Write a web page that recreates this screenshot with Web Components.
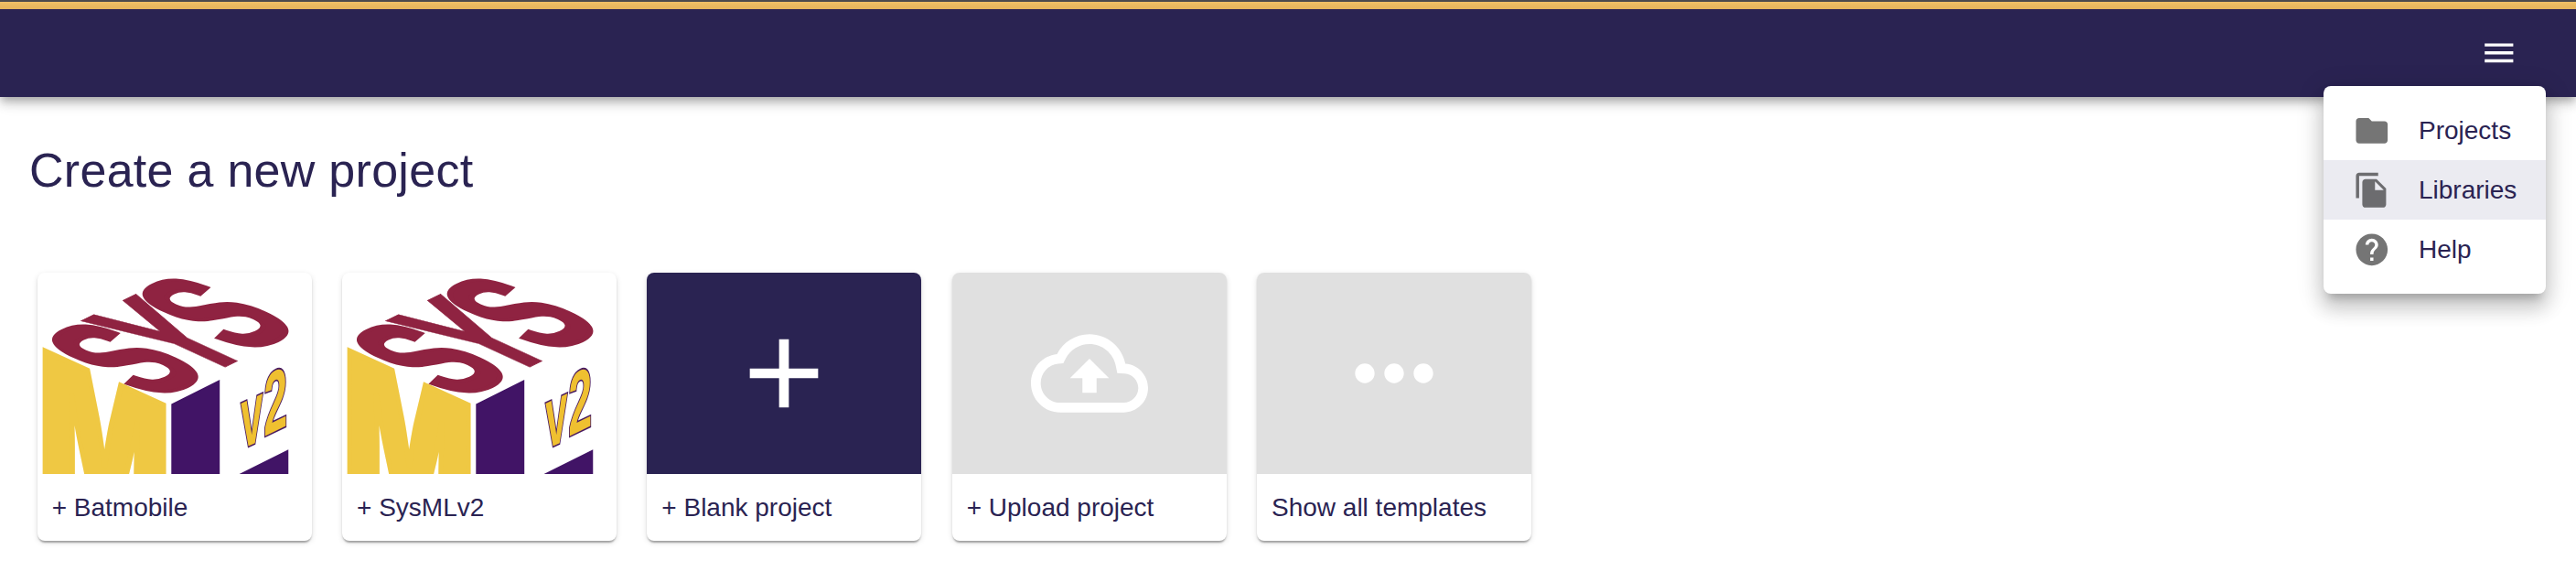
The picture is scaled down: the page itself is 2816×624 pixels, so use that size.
<!DOCTYPE html>
<html lang="en">
<head>
<meta charset="utf-8">
<title>Projects</title>
<style>
html,body{margin:0;height:100%;overflow:hidden;background:#fff}
body{font-family:"Liberation Sans",Arial,sans-serif;color:#2a2352}
</style>
</head>
<body>
<app-shell>
  <nav-bar slot="bar">
    <nav-menu>
      <nav-item icon="folder">Projects</nav-item>
      <nav-item icon="copy" selected>Libraries</nav-item>
      <nav-item icon="help">Help</nav-item>
    </nav-menu>
  </nav-bar>
  <h1 slot="title" style="margin:0;font:inherit">Create a new project</h1>
  <template-card><sysml-logo slot="media"></sysml-logo>+ Batmobile</template-card>
  <template-card><sysml-logo slot="media"></sysml-logo>+ SysMLv2</template-card>
  <template-card tone="dark"><md-icon slot="media" name="add"></md-icon>+ Blank project</template-card>
  <template-card tone="grey"><md-icon slot="media" name="upload"></md-icon>+ Upload project</template-card>
  <template-card tone="grey"><md-icon slot="media" name="more"></md-icon>Show all templates</template-card>
</app-shell>
<script>
const define = (name, html, setup) => customElements.define(name, class extends HTMLElement {
  constructor() {
    super();
    this.attachShadow({ mode: "open" }).innerHTML = html;
  }
  connectedCallback() { if (setup) setup(this, this.shadowRoot); }
});

const ICONS = {
  add: "M19 13h-6v6h-2v-6H5v-2h6V5h2v6h6v2z",
  upload: "M19.35 10.04C18.67 6.59 15.64 4 12 4 9.11 4 6.6 5.64 5.35 8.04 2.34 8.36 0 10.91 0 14c0 3.31 2.69 6 6 6h13c2.76 0 5-2.24 5-5 0-2.64-2.05-4.78-4.65-4.96zM19 18H6c-2.21 0-4-1.79-4-4 0-2.05 1.53-3.76 3.56-3.97l1.07-.11.5-.95C8.08 7.14 9.94 6 12 6c2.62 0 4.88 1.86 5.39 4.43l.3 1.5 1.53.11c1.56.1 2.78 1.41 2.78 2.96 0 1.65-1.35 3-3 3zM8 13h2.55v3h2.9v-3H16l-4-4z",
  more: "M6 10c-1.1 0-2 .9-2 2s.9 2 2 2 2-.9 2-2-.9-2-2-2zm12 0c-1.1 0-2 .9-2 2s.9 2 2 2 2-.9 2-2-.9-2-2-2zm-6 0c-1.1 0-2 .9-2 2s.9 2 2 2 2-.9 2-2-.9-2-2-2z",
  menu: "M3 18h18v-2H3v2zm0-5h18v-2H3v2zm0-7v2h18V6H3z",
  folder: "M10 4H4c-1.1 0-1.99.9-1.99 2L2 18c0 1.1.9 2 2 2h16c1.1 0 2-.9 2-2V8c0-1.1-.9-2-2-2h-8l-2-2z",
  copy: "M16 1H4c-1.1 0-2 .9-2 2v14h2V3h12V1zm-1 4l6 6v10c0 1.1-.9 2-2 2H7.99C6.89 23 6 22.1 6 21l.01-14c0-1.1.89-2 1.99-2h7zm-1 7h5.5L14 6.5V12z",
  help: "M12 2C6.48 2 2 6.48 2 12s4.48 10 10 10 10-4.48 10-10S17.52 2 12 2zm1 17h-2v-2h2v2zm2.07-7.75l-.9.92C13.45 12.9 13 13.5 13 15h-2v-.5c0-1.1.45-2.1 1.17-2.83l1.24-1.26c.37-.36.59-.86.59-1.41 0-1.1-.9-2-2-2s-2 .9-2 2H8c0-2.21 1.79-4 4-4s4 1.79 4 4c0 .88-.36 1.68-.93 2.25z"
};

define("md-icon", `<style>
:host{display:block;width:128px;height:128px;flex:none}
svg{display:block;width:100%;height:100%;fill:currentColor}
</style><svg viewBox="0 0 24 24" aria-hidden="true"><path/></svg>`,
  (el, root) => root.querySelector("path").setAttribute("d", ICONS[el.getAttribute("name")]));

/* Each letter lies on a face of the cube through its own matrix. */
define("sysml-logo", `<style>
:host{display:block;width:300px;height:220px}
svg{display:block;width:100%;height:100%}
text{font-size:100px;font-weight:700;font-family:"Liberation Sans",Arial,sans-serif}
.red{fill:#8f2341;stroke:#8f2341;stroke-width:3}
.y{stroke-width:.5}
.m{fill:#efc843;stroke:#efc843;stroke-width:3.5;font-family:Inter,sans-serif;font-weight:900}
.l{fill:#411466;stroke:#411466;stroke-width:1;font-family:Inter,sans-serif;font-weight:900}
.v{fill:#efc030;stroke:#4a1c60;stroke-width:2.8px;vector-effect:non-scaling-stroke;paint-order:stroke}
</style><svg viewBox="33 39 900 660">
<text class="red" transform="matrix(2.76 -1.35 5.63 2.6 421 455.5)">S</text>
<text class="red y" transform="matrix(2.85 -1.39 5.85 2.69 573 385)">Y</text>
<text class="red" transform="matrix(2.76 -1.35 5.63 2.6 717 305.5)">S</text>
<text class="m" transform="matrix(4.51 2.06 0 5.95 36.7 720)">M</text>
<text class="l" transform="matrix(7.66 -3.83 0 6 439.8 925)">L</text>
<text class="v" transform="matrix(1.3 -.6 0 2.85 700 619)">v</text>
<text class="v" transform="matrix(1.4 -.68 0 2.85 775 577)">2</text>
</svg>`);

define("template-card", `<style>
:host{display:flex;flex-direction:column;width:300px;height:293px;border-radius:8px;overflow:hidden;background:#fff;
 box-shadow:0 4px 2px -2px rgba(0,0,0,.2),0 2px 2px rgba(0,0,0,.14),0 2px 6px rgba(0,0,0,.12)}
.media{height:220px;display:flex;align-items:center;justify-content:center;color:#fff}
:host([tone=dark]) .media{background:#2a2352}
:host([tone=grey]) .media{background:#e0e0e0}
.label{flex:1;display:flex;align-items:center;padding:0 16px;font-size:28px;white-space:nowrap}
</style><div class="media"><slot name="media"></slot></div><div class="label"><span><slot></slot></span></div>`);

define("nav-item", `<style>
:host{display:flex;align-items:center;height:65px;padding:0 32px;font-size:28px}
:host([selected]){background:#ebebf1}
md-icon{width:41.6px;height:41.6px;color:rgba(0,0,0,.54)}
span{margin-left:30.4px}
</style><md-icon></md-icon><span><slot></slot></span>`,
  (el, root) => {
    const icon = document.createElement("md-icon");
    icon.setAttribute("name", el.getAttribute("icon"));
    root.querySelector("md-icon").replaceWith(icon);
  });

define("nav-menu", `<style>
:host{display:block;box-sizing:border-box;width:243px;height:227px;padding:16px 0;border-radius:8px;background:#fff;
 box-shadow:0 10px 10px -6px rgba(0,0,0,.2),0 16px 20px 2px rgba(0,0,0,.14),0 6px 28px 4px rgba(0,0,0,.12)}
</style><slot></slot>`);

define("nav-bar", `<style>
:host{display:block;position:relative;height:106px;background:#2a2352;
 box-shadow:0 4px 8px -2px rgba(0,0,0,.2),0 8px 10px rgba(0,0,0,.14),0 2px 20px rgba(0,0,0,.12)}
.edge{height:2px;background:#4b4a4c}
.stripe{height:8px;background:linear-gradient(#f0c066,#e3b35b)}
.tools{height:95px;display:flex;justify-content:flex-end;align-items:center;padding-right:63.7px;color:#fff}
.tools md-icon{width:41.6px;height:41.6px}
.menu{position:absolute;top:94px;right:33px}
</style><div class="edge"></div><div class="stripe"></div>
<div class="tools"><md-icon name="menu"></md-icon></div>
<div class="menu"><slot></slot></div>`);

define("app-shell", `<style>
:host{display:block}
.title{padding:50px 32px 0;height:142px;font-size:52px;line-height:60px;letter-spacing:.28px}
.cards{display:flex;gap:33.33px;padding-left:40.7px}
</style><slot name="bar"></slot><div class="title"><slot name="title"></slot></div><div class="cards"><slot></slot></div>`);
</script>
</body>
</html>
